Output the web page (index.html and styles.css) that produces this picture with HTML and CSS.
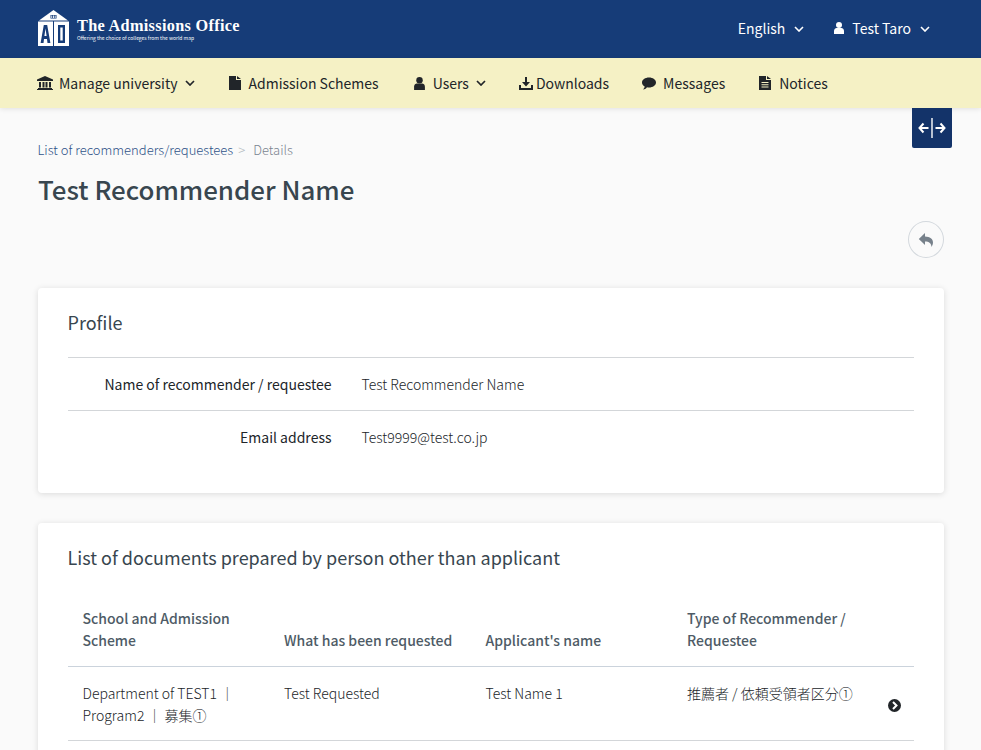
FILE: index.html
```html
<!DOCTYPE html>
<html lang="en">
<head>
<meta charset="utf-8">
<title>Test Recommender Name</title>
<link rel="stylesheet" href="styles.css">
</head>
<body>
<div class="page">
  <header class="topbar">
    <a class="brand">
      <svg class="brand-mark" width="32" height="36" viewBox="0 0 32 36">
        <path fill="#fff" d="M15.500 0 1 10.500h29z"/>
        <path fill="#163c78" d="M12.500 5h6v3.500h-6z"/>
        <path fill="#fff" d="M13.300 5.500h.9v2.500h-.9zM15 5.500h.9v2.500H15zM16.700 5.500h.9v2.500h-.9z"/>
        <path fill="#fff" d="M0 11.500h15V36H0zM16 11.500H31V36H16z"/>
        <path fill="#163c78" d="M5.800 15h3.400l3.200 18H9.500l-.5-4H6l-.5 4H2.600zM6.400 26h2.200L7.500 18.500zM20 15h7v18h-7zM22.300 17.500v13h2.400v-13z"/>
      </svg>
      <span class="brand-text">
        <span class="brand-name">The Admissions Office</span>
        <span class="brand-tag">Offering the choice of colleges from the world map</span>
      </span>
    </a>
    <nav class="top-menu">
      <span class="top-item">English
        <svg class="chev" width="10" height="6" viewBox="0 0 10 6"><path d="M1 1l4 4 4-4" fill="none" stroke="currentColor" stroke-width="1.600"/></svg>
      </span>
      <span class="top-item">
        <svg class="user" width="10" height="12" viewBox="0 0 10 12"><circle cx="5" cy="3" r="3" fill="currentColor"/><path d="M0 12V9c0-2 1.500-3 2.500-3h5C8.500 6 10 7 10 9v3z" fill="currentColor"/></svg>
        <span class="top-name">Test Taro</span>
        <svg class="chev" width="10" height="6" viewBox="0 0 10 6"><path d="M1 1l4 4 4-4" fill="none" stroke="currentColor" stroke-width="1.600"/></svg>
      </span>
    </nav>
  </header>

  <nav class="subnav">
    <span class="sub-item">
      <svg width="16" height="14" viewBox="0 0 16 14"><path fill="currentColor" d="M8 0l8 3.500V5H0V3.500zM1 12h14v1H1zM0 13h16v1H0zM2 6h2v5.500H2zM5.500 6h2v5.500h-2zM8.500 6h2v5.500h-2zM12 6h2v5.500h-2z"/></svg>
      <span class="sub-label label-bank">Manage university</span>
      <svg class="chev-sub" width="10" height="6" viewBox="0 0 10 6"><path d="M1 1l4 4 4-4" fill="none" stroke="currentColor" stroke-width="1.700"/></svg>
    </span>
    <span class="sub-item item-wide">
      <svg width="12" height="14" viewBox="0 0 12 14"><path fill="currentColor" d="M0 0h7v4h5v10H0zM8 0l4 3H8z"/></svg>
      <span class="sub-label">Admission Schemes</span>
    </span>
    <span class="sub-item item-users">
      <svg width="11" height="13" viewBox="0 0 10 12"><circle cx="5" cy="3" r="3" fill="currentColor"/><path d="M0 12V9c0-2 1.500-3 2.500-3h5C8.500 6 10 7 10 9v3z" fill="currentColor"/></svg>
      <span class="sub-label label-users">Users</span>
      <svg class="chev-sub" width="10" height="6" viewBox="0 0 10 6"><path d="M1 1l4 4 4-4" fill="none" stroke="currentColor" stroke-width="1.700"/></svg>
    </span>
    <span class="sub-item">
      <svg width="14" height="13" viewBox="0 0 14 13"><path fill="currentColor" d="M6 0h2v5h3L7 9.500 3 5h3zM0 8h2v3h10V8h2v5H0z"/></svg>
      <span class="sub-label label-tight">Downloads</span>
    </span>
    <span class="sub-item">
      <svg width="14" height="13" viewBox="0 0 14 13"><path fill="currentColor" d="M7 .5c3.900 0 7 2.300 7 5s-3.100 5-7 5c-.7 0-1.300-.1-2-.2C4 12 2.500 12.500 1 12.500c1-.8 1.600-2 1.700-3C1 8.600 0 7.100 0 5.500c0-2.700 3.100-5 7-5z"/></svg>
      <span class="sub-label">Messages</span>
    </span>
    <span class="sub-item item-notices">
      <svg width="12" height="14" viewBox="0 0 12 14"><path fill="currentColor" fill-rule="evenodd" d="M0 0h7v4h5v10H0zM2.500 6v1h7V6zM2.500 8.200v1h7v-1zM2.500 10.400v1h7v-1z"/><path fill="currentColor" d="M8 0l4 3H8z"/></svg>
      <span class="sub-label label-users">Notices</span>
    </span>
  </nav>

  <button class="split-toggle" aria-label="Toggle width">
    <svg width="28" height="20" viewBox="0 0 28 20"><path d="M14 0v20" fill="none" stroke="#fff" stroke-width="1.400"/><path d="M1.500 10h9M5.500 5.500L1.500 10l4 4.500M17.500 10h9M22.500 5.500l4 4.500-4 4.500" fill="none" stroke="#fff" stroke-width="2"/></svg>
  </button>

  <main class="content">
    <div class="crumbs">
      <a class="crumb-link">List of recommenders/requestees</a>
      <span class="crumb-sep">&gt;</span>
      <span class="crumb-current">Details</span>
    </div>
    <h1 class="title">Test Recommender Name</h1>
    <div class="actions">
      <span class="back">
        <svg width="16" height="14" viewBox="0 0 16 14"><path fill="#77818b" d="M7 0v3.500c5 .1 8 2.500 8 6 0 1.800-.8 3.300-1.600 4.500.3-3.500-2.400-5.500-6.400-5.500V12L.8 6z"/></svg>
      </span>
    </div>

    <section class="card card-profile">
      <h2 class="card-title">Profile</h2>
      <dl class="fields">
        <div class="field">
          <dt>Name of recommender / requestee</dt>
          <dd>Test Recommender Name</dd>
        </div>
        <div class="field">
          <dt>Email address</dt>
          <dd>Test9999@test.co.jp</dd>
        </div>
      </dl>
    </section>

    <section class="card card-docs">
      <h2 class="card-title">List of documents prepared by person other than applicant</h2>
      <div class="doc-table">
        <div class="doc-row doc-head">
          <div>School and Admission Scheme</div>
          <div>What has been requested</div>
          <div>Applicant's name</div>
          <div>Type of Recommender / Requestee</div>
        </div>
        <div class="doc-row doc-body">
          <div>Department of TEST1 ｜ Program2 ｜ 募集①</div>
          <div>Test Requested</div>
          <div>Test Name 1</div>
          <div>推薦者 / 依頼受領者区分①</div>
          <svg class="row-go" width="13" height="13" viewBox="0 0 13 13"><circle cx="6.500" cy="6.500" r="6.500" fill="#212529"/><path d="M5 3l3.500 3.500L5 10" fill="none" stroke="#fff" stroke-width="2"/></svg>
        </div>
      </div>
    </section>
  </main>
</div>
</body>
</html>
```
FILE: styles.css
```css
* { box-sizing: border-box; }
html, body { margin: 0; padding: 0; }
body {
  background: #fafafa;
  color: #212529;
  font-family: "Noto Sans CJK JP", "Noto Sans", sans-serif;
  font-size: 14px;
}
.page { position: relative; height: 750px; overflow: hidden; }

.topbar {
  height: 58px;
  background: #163c78;
  color: #fff;
  display: flex;
  align-items: center;
  justify-content: space-between;
  padding: 0 51px 2px 38px;
}
.brand { display: flex; align-items: center; gap: 7px; }
.brand-mark { display: block; }
.brand-text { display: flex; flex-direction: column; margin-top: 3px; }
.brand-name {
  font-family: "Liberation Serif", serif;
  font-weight: 700;
  font-size: 16.300px;
  line-height: 16px;
  letter-spacing: .3px;
  white-space: nowrap;
}
.brand-tag { font-size: 5px; line-height: 7px; white-space: nowrap; }
.top-menu { display: flex; align-items: center; gap: 30px; }
.top-item { display: flex; align-items: center; font-size: 14px; line-height: 20px; }
.top-item .chev { margin-left: 9px; margin-top: 1px; }
.top-name { margin-left: 8px; }

.subnav {
  height: 50px;
  background: #f5f1c5;
  box-shadow: 0 1px 5px rgba(0,0,0,.1);
  display: flex;
  align-items: center;
  padding-left: 37px;
  gap: 33px;
  position: relative;
}
.sub-item { display: flex; align-items: center; color: #212529; line-height: 20px; white-space: nowrap; }
.sub-label { margin-left: 7px; }
.label-bank { margin-left: 6px; }
.label-users { margin-left: 8px; }
.label-tight { margin-left: 3px; }
.item-wide { margin-left: 1px; }
.item-users { margin-left: 2px; }
.item-notices { margin-left: 1px; }
.sub-item svg { display: block; }
.chev-sub { margin-left: 8px; }
.item-users .chev-sub { margin-left: 7px; }

.split-toggle {
  position: absolute;
  top: 108px;
  left: 912px;
  width: 40px;
  height: 40px;
  padding: 0;
  border: 0;
  border-radius: 0 0 2px 2px;
  background: #133369;
  display: flex;
  align-items: center;
  justify-content: center;
}

.content { padding: 32px 37px 0 38px; }
.crumbs { display: flex; align-items: center; font-size: 13px; line-height: 20px; margin-left: -.5px; }
.crumb-link { color: #2f5288; font-weight: 300; }
.crumb-sep { color: #b4bac0; margin: 0 8px 0 5px; font-weight: 300; }
.crumb-current { color: #7b8490; font-weight: 300; }
.title {
  margin: 9px 0 0;
  color: #38464f;
  font-size: 25.900px;
  line-height: 40px;
  font-weight: 500;
}
.actions { display: flex; justify-content: flex-end; margin-top: 12px; }
.back {
  width: 36px;
  height: 37px;
  border: 1px solid #d3d8dd;
  border-radius: 50%;
  display: flex;
  align-items: center;
  justify-content: center;
}

.card {
  background: #fff;
  border-radius: 4px;
  box-shadow: 0 1px 6px rgba(0,0,0,.13);
  padding: 19px 30px 0;
}
.card-profile { height: 205px; margin-top: 30px; }
.card-docs { margin-top: 30px; height: 400px; }
.card-title {
  margin: 0 0 0 -.5px;
  color: #38464f;
  font-size: 18px;
  line-height: 30px;
  font-weight: 400;
}
.fields { margin: 20px 0 0; }
.field {
  display: flex;
  height: 53px;
  border-top: 1px solid #d3d6d9;
  align-items: center;
}
.field dt {
  width: 263.500px;
  text-align: right;
  font-weight: 400;
  line-height: 20px;
}
.field dd {
  margin: 0 0 0 30px;
  font-weight: 300;
  line-height: 20px;
}

.doc-table { margin-top: 35px; }
.doc-row {
  display: grid;
  grid-template-columns: 201.500px 201.500px 201.500px 1fr;
  position: relative;
  line-height: 22px;
}
.doc-row > div { padding: 0 14.500px; }
.doc-head {
  color: #4e5b66;
  font-weight: 500;
  align-items: end;
  padding-bottom: 15px;
  border-bottom: 1px solid #cbd3dc;
}
.doc-head > div:last-child { padding-right: 50px; }
.doc-body {
  padding: 15px 0 14px;
  border-bottom: 1px solid #d3d6d9;
  font-weight: 300;
}
.doc-body > div:last-of-type { padding-right: 40px; }
.row-go { position: absolute; right: 13px; top: 32px; }
```
